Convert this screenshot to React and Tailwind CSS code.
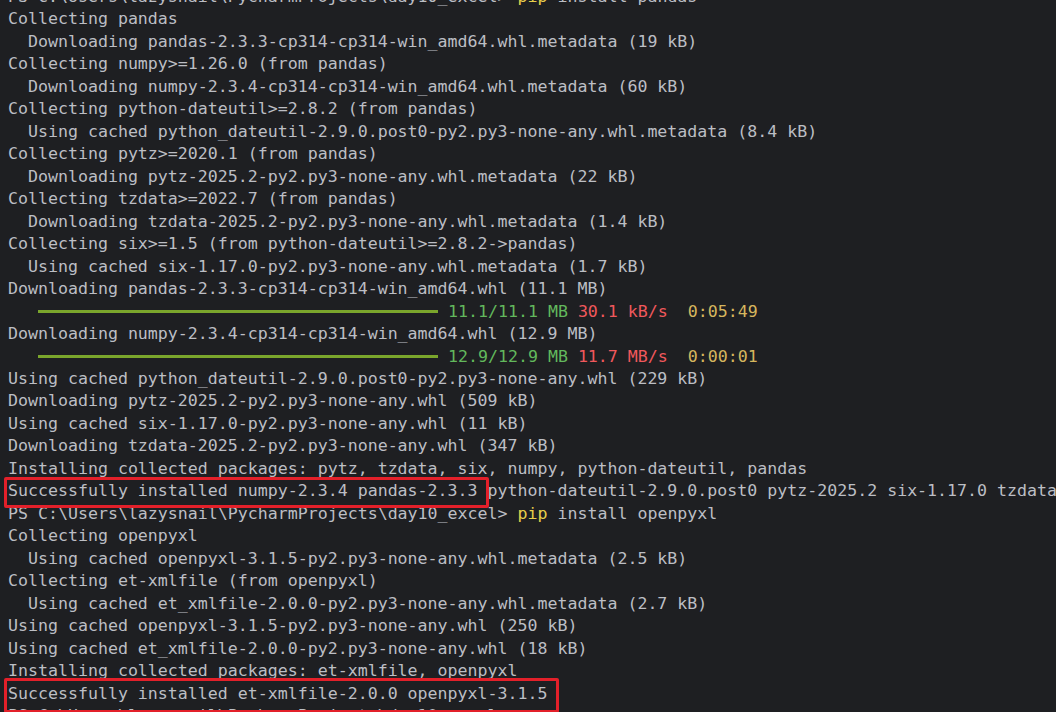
import React from 'react';

const PROMPT = 'PS C:\\Users\\lazysnail\\PycharmProjects\\day10_excel> ';

const lines = [
  { kind: 'cmd', rest: ' install pandas' },
  'Collecting pandas',
  '  Downloading pandas-2.3.3-cp314-cp314-win_amd64.whl.metadata (19 kB)',
  'Collecting numpy>=1.26.0 (from pandas)',
  '  Downloading numpy-2.3.4-cp314-cp314-win_amd64.whl.metadata (60 kB)',
  'Collecting python-dateutil>=2.8.2 (from pandas)',
  '  Using cached python_dateutil-2.9.0.post0-py2.py3-none-any.whl.metadata (8.4 kB)',
  'Collecting pytz>=2020.1 (from pandas)',
  '  Downloading pytz-2025.2-py2.py3-none-any.whl.metadata (22 kB)',
  'Collecting tzdata>=2022.7 (from pandas)',
  '  Downloading tzdata-2025.2-py2.py3-none-any.whl.metadata (1.4 kB)',
  'Collecting six>=1.5 (from python-dateutil>=2.8.2->pandas)',
  '  Using cached six-1.17.0-py2.py3-none-any.whl.metadata (1.7 kB)',
  'Downloading pandas-2.3.3-cp314-cp314-win_amd64.whl (11.1 MB)',
  { kind: 'bar', size: '11.1/11.1 MB', speed: '30.1 kB/s', eta: '0:05:49' },
  'Downloading numpy-2.3.4-cp314-cp314-win_amd64.whl (12.9 MB)',
  { kind: 'bar', size: '12.9/12.9 MB', speed: '11.7 MB/s', eta: '0:00:01' },
  'Using cached python_dateutil-2.9.0.post0-py2.py3-none-any.whl (229 kB)',
  'Downloading pytz-2025.2-py2.py3-none-any.whl (509 kB)',
  'Using cached six-1.17.0-py2.py3-none-any.whl (11 kB)',
  'Downloading tzdata-2025.2-py2.py3-none-any.whl (347 kB)',
  'Installing collected packages: pytz, tzdata, six, numpy, python-dateutil, pandas',
  { kind: 'mark', text: 'Successfully installed numpy-2.3.4 pandas-2.3.3 python-dateutil-2.9.0.post0 pytz-2025.2 six-1.17.0 tzdata-2025.2', box: 'w-[485px] h-[31px] top-[-3px]' },
  { kind: 'cmd', rest: ' install openpyxl' },
  'Collecting openpyxl',
  '  Using cached openpyxl-3.1.5-py2.py3-none-any.whl.metadata (2.5 kB)',
  'Collecting et-xmlfile (from openpyxl)',
  '  Using cached et_xmlfile-2.0.0-py2.py3-none-any.whl.metadata (2.7 kB)',
  'Using cached openpyxl-3.1.5-py2.py3-none-any.whl (250 kB)',
  'Using cached et_xmlfile-2.0.0-py2.py3-none-any.whl (18 kB)',
  'Installing collected packages: et-xmlfile, openpyxl',
  { kind: 'mark', text: 'Successfully installed et-xmlfile-2.0.0 openpyxl-3.1.5', box: 'w-[555px] h-[35px] top-[-5px]' },
  PROMPT,
];

const Line = ({ line }) => {
  if (typeof line === 'string') return <div>{line || ' '}</div>;

  if (line.kind === 'cmd') {
    return (
      <div>
        {PROMPT}
        <span className="text-[#e8cf4a]">pip</span>
        {line.rest}
      </div>
    );
  }

  if (line.kind === 'bar') {
    return (
      <div className="flex items-center">
        <span>{'   '}</span>
        <span className="inline-block w-[400px] h-[3px] bg-[#7aa52c]" />
        <span>{' '}</span>
        <span className="text-[#62b85c]">{line.size}</span>
        <span>{' '}</span>
        <span className="text-[#f0585c]">{line.speed}</span>
        <span>{'  '}</span>
        <span className="text-[#d6b65e]">{line.eta}</span>
      </div>
    );
  }

  // highlighted result line with a red annotation box
  return (
    <div className="relative">
      {line.text}
      <div className={`absolute left-[-4px] border-[3px] border-[#e3202a] rounded-[2px] pointer-events-none ${line.box}`} />
    </div>
  );
};

export default function App() {
  return (
    <div className="w-[1056px] h-[712px] overflow-hidden bg-[#1e1f22]">
      <div className="mt-[-14px] pl-[8px] whitespace-pre font-['DejaVu_Sans_Mono',monospace] text-[16.6px] leading-[22.47px] text-[#bcbec4]">
        {lines.map((line, i) => (
          <Line key={i} line={line} />
        ))}
      </div>
    </div>
  );
}
